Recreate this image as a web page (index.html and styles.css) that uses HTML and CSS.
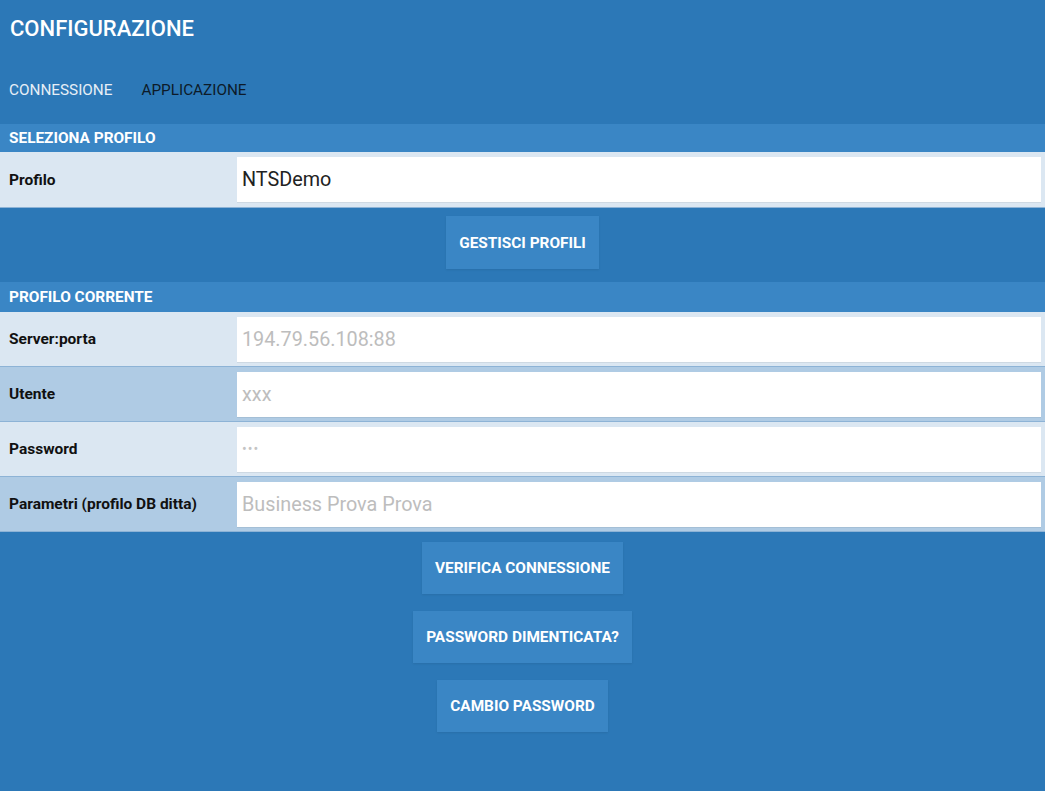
FILE: index.html
```html
<!DOCTYPE html>
<html lang="it">
<head>
<meta charset="utf-8">
<title>Configurazione</title>
<link rel="stylesheet" href="styles.css">
</head>
<body>
<div class="appbar">CONFIGURAZIONE</div>
<div class="tabs">
  <span class="tab">CONNESSIONE</span>
  <span class="tab active">APPLICAZIONE</span>
</div>

<div class="section-head">SELEZIONA PROFILO</div>
<div class="row light tall">
  <div class="label">Profilo</div>
  <div class="field value">NTSDemo</div>
</div>
<div class="actions first">
  <div class="btn">GESTISCI PROFILI</div>
</div>

<div class="section-head second">PROFILO CORRENTE</div>
<div class="row light">
  <div class="label">Server:porta</div>
  <div class="field">194.79.56.108:88</div>
</div>
<div class="row dark">
  <div class="label">Utente</div>
  <div class="field">xxx</div>
</div>
<div class="row light">
  <div class="label">Password</div>
  <div class="field dots">•••</div>
</div>
<div class="row dark">
  <div class="label">Parametri (profilo DB ditta)</div>
  <div class="field">Business Prova Prova</div>
</div>

<div class="actions">
  <div class="btn">VERIFICA CONNESSIONE</div>
  <div class="btn">PASSWORD DIMENTICATA?</div>
  <div class="btn">CAMBIO PASSWORD</div>
</div>
</body>
</html>
```

FILE: styles.css
```css
html, body {
  margin: 0;
  padding: 0;
}
body {
  background: #2c78b7;
  font-family: Roboto, "Liberation Sans", sans-serif;
  width: 1045px;
  height: 791px;
  overflow: hidden;
}
.appbar {
  height: 56px;
  display: flex;
  align-items: center;
  padding-left: 10px;
  color: #ffffff;
  font-size: 22px;
  font-weight: 500;
}
.tabs {
  height: 68px;
  display: flex;
  align-items: center;
  padding-left: 9px;
  gap: 29px;
  font-size: 15.3px;
  color: #e6eef6;
}
.tab.active {
  color: #0d1b29;
}
.section-head {
  height: 28px;
  background: #3a86c5;
  color: #ffffff;
  font-weight: 700;
  font-size: 15.4px;
  display: flex;
  align-items: center;
  padding-left: 9px;
}
.section-head.second {
  height: 30px;
}
.row {
  height: 54px;
  display: flex;
  align-items: center;
  border-bottom: 1px solid #8db3d6;
}
.row.tall { height: 55px; }
.row.light { background: #dbe7f2; }
.row.dark { background: #afcbe4; }
.label {
  width: 228px;
  padding-left: 9px;
  font-size: 15.5px;
  font-weight: 700;
  color: #111111;
}
.field {
  flex: 1;
  height: 45px;
  margin-right: 4px;
  background: #ffffff;
  display: flex;
  align-items: center;
  padding-left: 5px;
  font-size: 19.8px;
  color: #bdbdbd;
  box-shadow: 0 1px 0 rgba(0,0,0,0.06);
}
.field.value { color: #222222; }
.field.dots { font-size: 14px; letter-spacing: 1px; color: #c4c4c4; }
.actions {
  display: flex;
  flex-direction: column;
  align-items: center;
  gap: 17px;
  padding-top: 10px;
}
.actions.first {
  padding-top: 8px;
  padding-bottom: 13px;
}
.actions.first .btn {
  height: 53px;
}
.btn {
  height: 52px;
  padding: 0 13px;
  display: flex;
  align-items: center;
  background: #3a86c5;
  color: #ffffff;
  font-size: 15.4px;
  font-weight: 700;
  box-shadow: 0 1px 2px rgba(0,0,0,0.08);
}
```
